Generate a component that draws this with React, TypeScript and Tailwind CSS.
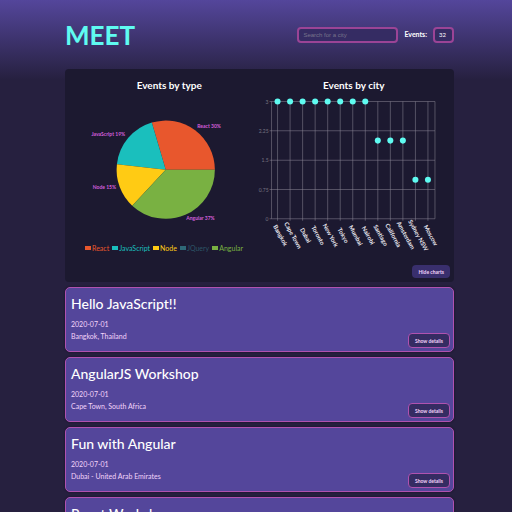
import React from 'react';

const slices = [
  { name: 'React', from: 0, to: 106.5, color: '#e8572d' },
  { name: 'JavaScript', from: 106.5, to: 173.5, color: '#1abfbd' },
  { name: 'Node', from: 173.5, to: 227, color: '#ffcb14' },
  { name: 'Angular', from: 227, to: 360, color: '#79b142' },
];

const pieLabels = [
  { text: 'React 30%', x: 120, y: 34, anchor: 'start' as const },
  { text: 'JavaScript 19%', x: 48, y: 42, anchor: 'end' as const },
  { text: 'Node 15%', x: 39, y: 95, anchor: 'end' as const },
  { text: 'Angular 37%', x: 109, y: 126, anchor: 'start' as const },
];

const legend = [
  { name: 'React', swatch: 'bg-[#e8572d]', text: 'text-[#e8572d]' },
  { name: 'JavaScript', swatch: 'bg-[#1abfbd]', text: 'text-[#1abfbd]' },
  { name: 'Node', swatch: 'bg-[#ffcb14]', text: 'text-[#ffcb14]' },
  { name: 'JQuery', swatch: 'bg-[#2f6877]', text: 'text-[#2c5567]' },
  { name: 'Angular', swatch: 'bg-[#79b142]', text: 'text-[#79b142]' },
];

const cities = [
  { name: 'Bangkok', count: 3 },
  { name: 'Cape Town', count: 3 },
  { name: 'Dubai', count: 3 },
  { name: 'Toronto', count: 3 },
  { name: 'New York', count: 3 },
  { name: 'Tokyo', count: 3 },
  { name: 'Mumbai', count: 3 },
  { name: 'Nairobi', count: 3 },
  { name: 'Santiago', count: 2 },
  { name: 'California', count: 2 },
  { name: 'Amsterdam', count: 2 },
  { name: 'Sydney NSW', count: 1 },
  { name: 'Moscow', count: 1 },
];

const events = [
  { title: 'Hello JavaScript!!', date: '2020-07-01', place: 'Bangkok, Thailand' },
  { title: 'AngularJS Workshop', date: '2020-07-01', place: 'Cape Town, South Africa' },
  { title: 'Fun with Angular', date: '2020-07-01', place: 'Dubai - United Arab Emirates' },
  { title: 'React Workshop', date: '2020-07-01', place: 'Toronto, Canada' },
];

function slicePath(from: number, to: number) {
  const cx = 88.5;
  const cy = 75.5;
  const r = 49;
  const point = (deg: number) => {
    const a = (deg * Math.PI) / 180;
    return `${(cx + r * Math.cos(a)).toFixed(2)} ${(cy - r * Math.sin(a)).toFixed(2)}`;
  };
  return `M${cx} ${cy}L${point(from)}A${r} ${r} 0 0 0 ${point(to)}Z`;
}

function TypeChart() {
  return (
    <section className="flex flex-col items-center">
      <h2 className="text-[10px] leading-4 font-bold">Events by type</h2>
      <svg viewBox="0 0 184 148" className="mt-px w-full overflow-visible" role="img" aria-label="Events by type">
        {slices.map((s) => (
          <path key={s.name} d={slicePath(s.from, s.to)} fill={s.color} />
        ))}
        {pieLabels.map((l) => (
          <text key={l.text} x={l.x} y={l.y} textAnchor={l.anchor} className="fill-[#d35fdb] text-[5px] font-bold">
            {l.text}
          </text>
        ))}
      </svg>
      <ul className="ml-2 flex gap-[3px] self-start text-[7px] leading-3">
        {legend.map((l) => (
          <li key={l.name} className={`flex items-center gap-px ${l.text}`}>
            <span className={`h-1 w-1.5 ${l.swatch}`} />
            {l.name}
          </li>
        ))}
      </ul>
    </section>
  );
}

function CityChart() {
  const left = 9.5;
  const right = 172.5;
  const top = 7.5;
  const bottom = 124.5;
  const xOf = (i: number) => 15.5 + i * 12.5;
  const yOf = (v: number) => bottom - (v / 3) * (bottom - top);
  return (
    <section className="flex flex-col items-center">
      <h2 className="text-[10px] leading-4 font-bold">Events by city</h2>
      <svg viewBox="0 0 184 164" className="mt-px w-full overflow-visible" role="img" aria-label="Events by city">
        <g stroke="#8d8a98" strokeOpacity="0.5" strokeWidth="1">
          {[0, 0.75, 1.5, 2.25, 3].map((v) => (
            <line key={v} x1={left - 2} x2={right} y1={yOf(v)} y2={yOf(v)} />
          ))}
          <line x1={left} x2={left} y1={top} y2={bottom} />
          <line x1={right} x2={right} y1={top} y2={bottom} />
          {cities.map((c, i) => (
            <line key={c.name} x1={xOf(i)} x2={xOf(i)} y1={top} y2={bottom + 2} />
          ))}
        </g>
        {[0, 0.75, 1.5, 2.25, 3].map((v) => (
          <text key={v} x={left - 3} y={yOf(v) + 2} textAnchor="end" className="fill-[#777482] text-[5px]">
            {v}
          </text>
        ))}
        {cities.map((c, i) => (
          <g key={c.name}>
            <circle cx={xOf(i)} cy={yOf(c.count)} r="3" fill="#5ffbf1" />
            <text
              transform={`translate(${xOf(i) + 1} 142) rotate(61)`}
              textAnchor="middle"
              className="fill-[#e8e6ee] text-[6px] font-bold"
            >
              {c.name}
            </text>
          </g>
        ))}
      </svg>
    </section>
  );
}

export default function App() {
  return (
    <div className="min-h-screen bg-[#26203f] bg-[linear-gradient(#54469b,#26203f_80px)] pr-[58px] pl-[65px] font-[Lato,'Open_Sans',sans-serif] text-white">
      <header className="flex h-[69px] items-center justify-between">
        <h1 className="text-[26px] leading-8 font-bold text-[#5ffbf1]">MEET</h1>
        <form className="flex items-center text-[7px]">
          <input
            type="text"
            aria-label="City"
            placeholder="Search for a city"
            className="h-4 w-[101px] rounded-[4px] border-2 border-[#9b4496] bg-[#352c63] px-1 font-['Liberation_Sans',Arial,sans-serif] text-[6px] placeholder:text-[#77738b]"
          />
          <label htmlFor="count" className="ml-1.5 font-bold">
            Events:
          </label>
          <input
            id="count"
            type="text"
            inputMode="numeric"
            defaultValue="32"
            className="ml-1.5 h-4 w-[21px] rounded-[4px] border-2 border-[#9b4496] bg-[#352c63] px-1 text-[6px]"
          />
        </form>
      </header>
      <main className="flex flex-col gap-[5px]">
        <div className="flex h-[213px] flex-col rounded-sm bg-[#1c1930] pt-2">
          <div className="grid grid-cols-2 pr-2 pl-3">
            <TypeChart />
            <CityChart />
          </div>
          <button
            type="button"
            className="mt-auto mr-1 mb-1 h-[13px] self-end rounded-[4px] bg-[#392f6d] px-1.5 text-[5px] leading-3 font-bold text-[#f3d3fa]"
          >
            Hide charts
          </button>
        </div>
        {events.map((e) => (
          <article
            key={e.title}
            className="flex h-[65px] items-end justify-between rounded-[5px] border border-[#b052b0] bg-[#54469b] pr-[3px] pb-[3px] pl-[5px] shadow-[0_0_2px_#120e24]"
          >
            <div className="self-start pt-2">
              <h2 className="text-[14px] leading-4 font-medium">{e.title}</h2>
              <p className="mt-1.5 text-[7px] leading-3 text-[#f3d3fa]">{e.date}</p>
              <p className="text-[7px] leading-3 text-[#f3d3fa]">{e.place}</p>
            </div>
            <button
              type="button"
              className="h-[15px] rounded-[4px] border border-[#b052b0] bg-[#352c63] px-1.5 text-[5px] leading-3 font-bold text-[#f3d3fa]"
            >
              Show details
            </button>
          </article>
        ))}
      </main>
    </div>
  );
}
